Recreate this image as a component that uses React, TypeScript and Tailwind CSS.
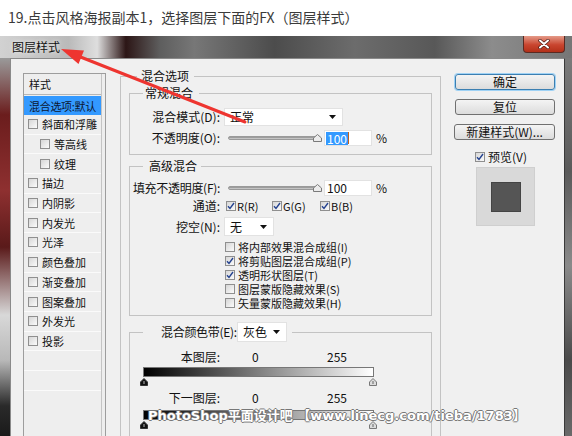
import React from 'react';

function Check({ on = false }: { on?: boolean }) {
  return (
    <span className="flex h-[10px] w-[10px] shrink-0 items-center justify-center border border-[#8f8f8f] bg-[linear-gradient(135deg,#d6d6d6,#fbfbfb)]">
      {on && (
        <svg width="8" height="8" viewBox="0 0 8 8">
          <path d="M1 4.2 L3 6.4 L7 1" fill="none" stroke="#24428f" strokeWidth="1.4" />
        </svg>
      )}
    </span>
  );
}

function Dropdown({ value, className }: { value: string; className: string }) {
  return (
    <div className={`flex shrink-0 items-center justify-between border border-[#e2e2e2] bg-white pl-[5px] pr-[6px] text-[12px] leading-[14px] text-[#111] ${className}`}>
      <span>{value}</span>
      <svg width="7" height="4" viewBox="0 0 7 4">
        <path d="M0 0 H7 L3.5 4 Z" fill="#111" />
      </svg>
    </div>
  );
}

function Slider() {
  return (
    <div className="relative flex h-[16px] w-[94px] items-center">
      <div className="h-[4px] w-[89px] rounded-full border border-[#9a9a9a] bg-[linear-gradient(#8a8a8a,#d6d6d6)]" />
      <svg className="absolute left-[85px] top-[4px]" width="9" height="8" viewBox="0 0 9 8">
        <path d="M0.5 7.5 V4 L4.5 0.5 L8.5 4 V7.5 Z" fill="#ececec" stroke="#7a7a7a" />
      </svg>
    </div>
  );
}

function Thumb({ dark = false }: { dark?: boolean }) {
  return (
    <svg width="8" height="8" viewBox="0 0 8 8">
      {dark ? (
        <>
          <path d="M0.5 7.5 V4 L4 0.5 L7.5 4 V7.5 Z" fill="#111" stroke="#333" />
          <path d="M4 3 V6" stroke="#bbb" strokeWidth="1" />
        </>
      ) : (
        <>
          <path d="M0.5 7.5 V4 L4 0.5 L7.5 4 V7.5 Z" fill="#dcdcdc" stroke="#777" />
          <path d="M4 3 V6" stroke="#666" strokeWidth="1" />
        </>
      )}
    </svg>
  );
}

const styleItems = [
  { label: '斜面和浮雕' },
  { label: '等高线', indent: true },
  { label: '纹理', indent: true },
  { label: '描边' },
  { label: '内阴影' },
  { label: '内发光' },
  { label: '光泽' },
  { label: '颜色叠加' },
  { label: '渐变叠加' },
  { label: '图案叠加' },
  { label: '外发光' },
  { label: '投影' },
  { label: '' },
  { label: '' },
];

const knockoutOptions = [
  { label: '将内部效果混合成组(I)', on: false },
  { label: '将剪贴图层混合成组(P)', on: true },
  { label: '透明形状图层(T)', on: true },
  { label: '图层蒙版隐藏效果(S)', on: false },
  { label: '矢量蒙版隐藏效果(H)', on: false },
];

export default function App() {
  return (
    <div className="relative flex h-[436px] w-[572px] flex-col overflow-hidden bg-white font-['Noto_Sans_CJK_SC',sans-serif] text-[#111]">
      {/* Article caption */}
      <div className="flex h-[36px] shrink-0 items-center pb-[2px] pl-[8px] text-[14px] text-[#3a3a3a]">
        19.点击风格海报副本1，选择图层下面的FX（图层样式）
      </div>

      {/* Title bar */}
      <div className="flex h-[22px] shrink-0 items-start justify-between bg-[linear-gradient(to_right,#d2d2d2_0%,#bababa_12%,#dedede_17%,#2c1616_22%,#5e5e5e_28%,#777_34%,#4c4c4c_48%,#6c6c6c_62%,#585858_76%,#8c8c8c_86%,#767676_100%)]">
        <span className="pl-[12px] pt-[4px] text-[12px] leading-[14px] text-[#111] [text-shadow:0_0_4px_#fff]">图层样式</span>
        <div className="mr-[7px] flex h-[17px] w-[42px] items-center justify-center rounded-b-[4px] border border-t-0 border-[#5a2a22] bg-[linear-gradient(#e49a88,#c9452f_55%,#b33019)]">
          <svg width="12" height="10" viewBox="0 0 12 10">
            <path d="M2 1.5 L10 8.5 M10 1.5 L2 8.5" stroke="#4a1a14" strokeWidth="3.4" strokeLinecap="round" />
            <path d="M2 1.5 L10 8.5 M10 1.5 L2 8.5" stroke="#fff" strokeWidth="2" strokeLinecap="round" />
          </svg>
        </div>
      </div>

      {/* Window body */}
      <div className="flex min-h-0 flex-1">
        <div className="w-[10px] shrink-0 bg-[linear-gradient(#9a9a9a,#6b1d1d_15%,#8e3030_35%,#5a1a1a_50%,#d8d8d8_68%,#b8b8b8_80%,#2a2a2a_92%,#1a1a1a)]" />

        <div className="flex w-[555px] shrink-0 items-start border-l border-r border-t border-l-[#8a8a8a] border-r-[#3a3a3a] border-t-[#8a8a8a] bg-[#f0f0f0]">
          {/* Style list */}
          <div className="ml-[12px] mt-[14px] flex h-[380px] w-[83px] shrink-0 border border-[#9d9d9d] bg-[#eeeeee]">
            <div className="w-[78px] border-r border-[#c4c4c4]">
              <div className="flex h-[21px] items-center border-b border-[#b6b6b6] pl-[5px] text-[11px] leading-[14px]">样式</div>
              <div className="mt-[1px] flex h-[19px] items-center whitespace-nowrap bg-[#3399ff] pl-[5px] text-[11px] leading-[14px] tracking-[-0.3px] text-[#0c1630]">混合选项:默认</div>
              {styleItems.map((item, i) => (
                <div
                  key={i}
                  className={`flex h-[19.7px] items-center gap-[4px] whitespace-nowrap border-b border-[#fafafa] text-[11px] leading-[14px] ${item.indent ? 'pl-[16px]' : 'pl-[4px]'}`}
                >
                  {item.label && <Check />}
                  <span>{item.label}</span>
                </div>
              ))}
            </div>
          </div>

          {/* Blending options */}
          <fieldset className="ml-[14px] mt-[9px] h-[400px] w-[321px] shrink-0 border border-[#c3c3c3] px-[8px]">
            <legend className="ml-[8px] pl-[4px] pr-[5px] text-[12px] leading-[16px]">混合选项</legend>

            <fieldset className="mt-[1px] border border-[#c3c3c3] pb-[8px]">
              <legend className="ml-[13px] pl-[2px] pr-[6px] text-[12px] leading-[16px]">常规混合</legend>
              <div className="mt-[7px] flex h-[18px] items-center whitespace-nowrap text-[12px] leading-[14px]">
                <span className="w-[90px] shrink-0 text-right">混合模式(D):</span>
                <Dropdown value="正常" className="ml-[4px] h-[18px] w-[119px]" />
              </div>
              <div className="mt-[4px] flex h-[16px] items-center whitespace-nowrap text-[12px] leading-[14px]">
                <span className="w-[90px] shrink-0 text-right">不透明度(O):</span>
                <div className="ml-[8px]"><Slider /></div>
                <div className="ml-[2px] flex h-[16px] w-[48px] items-center border border-[#e2e2e2] bg-white pl-[1px]">
                  <span className="bg-[#3399ff] px-[1px] leading-[13px] text-white">100</span>
                  <span className="h-[12px] w-[1px] bg-[#c0601c]" />
                </div>
                <span className="ml-[4px]">%</span>
              </div>
            </fieldset>

            <fieldset className="mt-[3px] border border-[#c3c3c3] pb-[5px]">
              <legend className="ml-[13px] pl-[6px] pr-[4px] text-[12px] leading-[16px]">高级混合</legend>
              <div className="mt-[6px] flex h-[16px] items-center whitespace-nowrap text-[12px] leading-[14px]">
                <span className="w-[90px] shrink-0 text-right tracking-[-0.3px]">填充不透明度(F):</span>
                <div className="ml-[8px]"><Slider /></div>
                <div className="ml-[2px] flex h-[16px] w-[48px] items-center border border-[#e2e2e2] bg-white pl-[2px]">100</div>
                <span className="ml-[4px]">%</span>
              </div>
              <div className="mt-[3px] flex h-[14px] items-center whitespace-nowrap text-[12px] leading-[14px]">
                <span className="w-[90px] shrink-0 text-right">通道:</span>
                <div className="ml-[6px] flex w-[46px] items-center gap-[1px]"><Check on /><span className="text-[11px]">R(R)</span></div>
                <div className="flex w-[48px] items-center gap-[1px]"><Check on /><span className="text-[11px]">G(G)</span></div>
                <div className="flex items-center gap-[1px]"><Check on /><span className="text-[11px]">B(B)</span></div>
              </div>
              <div className="mt-[4px] flex h-[19px] items-center whitespace-nowrap text-[12px] leading-[14px]">
                <span className="w-[90px] shrink-0 text-right">挖空(N):</span>
                <Dropdown value="无" className="ml-[4px] h-[19px] w-[50px]" />
              </div>
              <div className="mt-[4px] flex flex-col pl-[95px]">
                {knockoutOptions.map((opt) => (
                  <div key={opt.label} className="flex h-[14px] items-center gap-[3px] whitespace-nowrap text-[11px] leading-[13px]">
                    <Check on={opt.on} />
                    <span>{opt.label}</span>
                  </div>
                ))}
              </div>
            </fieldset>

            <fieldset className="mt-[6px] border border-[#c3c3c3] pb-[10px]">
              <legend className="ml-[13px] flex items-center whitespace-nowrap pl-[18px] pr-[5px] text-[12px] leading-[16px]">
                <span className="w-[76px] shrink-0 tracking-[-0.3px]">混合颜色带(E):</span>
                <Dropdown value="灰色" className="h-[20px] w-[50px]" />
              </legend>
              <div className="mt-[8px] flex h-[14px] items-center whitespace-nowrap text-[12px] leading-[14px]">
                <span className="w-[90px] shrink-0 text-right">本图层:</span>
                <span className="ml-[32px] w-[75px] shrink-0">0</span>
                <span>255</span>
              </div>
              <div className="ml-[13px] mt-[3px] h-[10px] w-[231px] border border-[#777] bg-[linear-gradient(to_right,#000,#fff)]" />
              <div className="ml-[10px] mt-[1px] flex h-[8px] w-[237px] justify-between">
                <Thumb dark />
                <Thumb />
              </div>
              <div className="mt-[5px] flex h-[14px] items-center whitespace-nowrap text-[12px] leading-[14px]">
                <span className="w-[90px] shrink-0 text-right">下一图层:</span>
                <span className="ml-[32px] w-[75px] shrink-0">0</span>
                <span>255</span>
              </div>
              <div className="ml-[13px] mt-[5px] h-[10px] w-[231px] border border-[#777] bg-[linear-gradient(to_right,#000,#fff)]" />
              <div className="ml-[10px] mt-[1px] flex h-[8px] w-[237px] justify-between">
                <Thumb dark />
                <Thumb />
              </div>
            </fieldset>
          </fieldset>

          {/* Buttons and preview */}
          <div className="ml-[13px] mt-[15px] flex w-[102px] shrink-0 flex-col text-[12px] leading-[14px]">
            <button className="ml-[1px] flex h-[16px] w-[100px] items-center justify-center rounded-[3px] border border-[#3c7fb1] bg-[linear-gradient(#f4f4f4,#dcdcdc)] leading-none shadow-[0_0_0_1px_#9fd2f5]">确定</button>
            <button className="ml-[1px] mt-[9px] flex h-[16px] w-[100px] items-center justify-center rounded-[3px] border border-[#707070] bg-[linear-gradient(#f4f4f4,#dcdcdc)] leading-none">复位</button>
            <button className="mt-[9px] flex h-[16px] w-[101px] items-center justify-center whitespace-nowrap rounded-[3px] border border-[#707070] bg-[linear-gradient(#f4f4f4,#dcdcdc)] leading-none">新建样式(W)...</button>
            <div className="ml-[21px] mt-[10px] flex h-[13px] items-center gap-[3px]">
              <Check on />
              <span>预览(V)</span>
            </div>
            <div className="ml-[22px] mt-[4px] flex h-[59px] w-[59px] items-center justify-center border border-[#cfcfcf] bg-[#d9d9d9]">
              <div className="h-[30px] w-[30px] border border-[#444] bg-[#555]" />
            </div>
          </div>
        </div>

        <div className="w-[7px] shrink-0 bg-[linear-gradient(#7a7a7a,#5a5a5a_30%,#8a8a8a_55%,#4a4a4a_80%,#6a6a6a)]" />
      </div>

      {/* Watermark over the dialog */}
      <div className="pointer-events-none absolute left-[148px] top-[407px] whitespace-nowrap font-['DejaVu_Sans','Noto_Sans_CJK_SC',sans-serif] text-[13px] font-bold leading-[18px] text-white [text-shadow:1px_0_#777,-1px_0_#777,0_1px_#777,0_-1px_#777]">
        PhotoShop平面设计吧 【www.linecg.com/tieba/1783】
      </div>

      {/* Red annotation arrow */}
      <svg className="pointer-events-none absolute left-0 top-0" width="572" height="436" viewBox="0 0 572 436">
        <path d="M245 122 L78 56" stroke="#ee3530" strokeWidth="3" strokeLinecap="round" />
        <path d="M61 49 L78.5 64 L84 50.5 Z" fill="#ee3530" />
      </svg>
    </div>
  );
}
